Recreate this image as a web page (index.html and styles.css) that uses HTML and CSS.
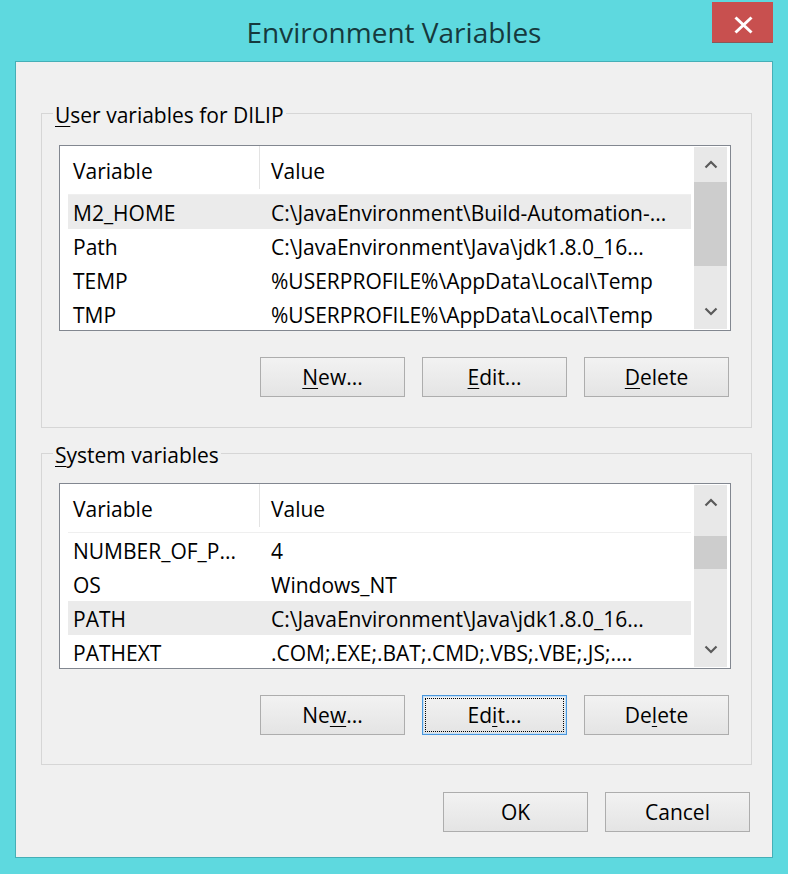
FILE: index.html
```html
<!DOCTYPE html>
<html lang="en">
<head>
<meta charset="utf-8">
<title>Environment Variables</title>
<link rel="stylesheet" href="styles.css">
</head>
<body>
<div class="titlebar">
  <div class="title">Environment Variables</div>
  <div class="close">
    <svg width="61" height="40" viewBox="0 0 61 40"><path d="M23.5 15.5 L39.5 30.5 M39.5 15.5 L23.5 30.5" stroke="#fff" stroke-width="3" fill="none"/></svg>
  </div>
</div>
<div class="client">
  <fieldset class="group group-user">
    <legend><u>U</u>ser variables for DILIP</legend>
    <div class="gbody">
      <div class="list">
        <div class="list-main">
          <div class="list-head"><div class="c1">Variable</div><div class="c2">Value</div></div>
          <div class="row sel"><div class="c1">M2_HOME</div><div class="c2">C:\JavaEnvironment\Build-Automation-...</div></div>
          <div class="row"><div class="c1">Path</div><div class="c2">C:\JavaEnvironment\Java\jdk1.8.0_16...</div></div>
          <div class="row"><div class="c1">TEMP</div><div class="c2">%USERPROFILE%\AppData\Local\Temp</div></div>
          <div class="row"><div class="c1">TMP</div><div class="c2">%USERPROFILE%\AppData\Local\Temp</div></div>
        </div>
        <div class="sb">
          <div class="track">
            <div class="arrow"><svg width="14" height="9" viewBox="0 0 14 9"><polyline points="1.5,7.5 7,2 12.5,7.5" fill="none" stroke="#5a5a5a" stroke-width="2.2"/></svg></div>
            <div class="thumb thumb-user"></div>
            <div class="fill"></div>
            <div class="arrow"><svg width="14" height="9" viewBox="0 0 14 9"><polyline points="1.5,1.5 7,7 12.5,1.5" fill="none" stroke="#5a5a5a" stroke-width="2.2"/></svg></div>
          </div>
        </div>
      </div>
      <div class="btns">
        <button class="btn"><span><u>N</u>ew...</span></button>
        <button class="btn"><span><u>E</u>dit...</span></button>
        <button class="btn"><span><u>D</u>elete</span></button>
      </div>
    </div>
  </fieldset>
  <fieldset class="group group-sys">
    <legend><u>S</u>ystem variables</legend>
    <div class="gbody">
      <div class="list">
        <div class="list-main">
          <div class="list-head"><div class="c1">Variable</div><div class="c2">Value</div></div>
          <div class="row"><div class="c1">NUMBER_OF_P...</div><div class="c2">4</div></div>
          <div class="row"><div class="c1">OS</div><div class="c2">Windows_NT</div></div>
          <div class="row sel"><div class="c1">PATH</div><div class="c2">C:\JavaEnvironment\Java\jdk1.8.0_16...</div></div>
          <div class="row"><div class="c1">PATHEXT</div><div class="c2">.COM;.EXE;.BAT;.CMD;.VBS;.VBE;.JS;....</div></div>
        </div>
        <div class="sb">
          <div class="track">
            <div class="arrow"><svg width="14" height="9" viewBox="0 0 14 9"><polyline points="1.5,7.5 7,2 12.5,7.5" fill="none" stroke="#5a5a5a" stroke-width="2.2"/></svg></div>
            <div class="gap-sys"></div>
            <div class="thumb thumb-sys"></div>
            <div class="fill"></div>
            <div class="arrow"><svg width="14" height="9" viewBox="0 0 14 9"><polyline points="1.5,1.5 7,7 12.5,1.5" fill="none" stroke="#5a5a5a" stroke-width="2.2"/></svg></div>
          </div>
        </div>
      </div>
      <div class="btns">
        <button class="btn"><span>Ne<u>w</u>...</span></button>
        <button class="btn focus"><span>Ed<u>i</u>t...</span></button>
        <button class="btn"><span>De<u>l</u>ete</span></button>
      </div>
    </div>
  </fieldset>
  <div class="dlg-btns">
    <button class="btn">OK</button>
    <button class="btn">Cancel</button>
  </div>
</div>
</body>
</html>
```

FILE: styles.css
```css
html, body {
  margin: 0;
  padding: 0;
}
body {
  width: 788px;
  height: 874px;
  overflow: hidden;
  background: #5ed9df;
  font-family: "Open Sans", "Noto Sans", sans-serif;
  font-size: 21px;
  color: #000;
}
.titlebar {
  display: grid;
  grid-template-columns: 1fr auto 1fr;
  height: 61px;
}
.title {
  grid-column: 2;
  padding-top: 13px;
  font-size: 28px;
  line-height: 38px;
  color: #16393d;
  white-space: nowrap;
}
.close {
  grid-column: 3;
  justify-self: end;
  align-self: start;
  margin: 2px 15px 0 0;
  width: 61px;
  height: 40px;
  background: #c8504f;
  box-shadow: 0 1px 0 #8a5858;
}
.close svg {
  display: block;
}
.client {
  margin: 0 15px;
  background: #f0f0f0;
  border: 1px solid #45afb7;
  padding: 37px 0 25px;
}
.group {
  margin: 0 20px 0 25px;
  padding: 0;
  border: 1px solid #d6d6d6;
  min-width: 0;
}
.group-sys {
  margin-top: 11px;
}
legend {
  margin-left: 11px;
  padding: 4px 2px 0;
  line-height: 24px;
  font-size: 21px;
}
u {
  text-decoration-thickness: 1px;
  text-underline-offset: 3px;
}
.gbody {
  padding: 18px 20px 30px 17px;
}
.group-sys .gbody {
  padding-top: 16px;
  padding-bottom: 29px;
}
.list {
  display: flex;
  height: 186px;
  box-sizing: border-box;
  border: 1px solid #828790;
  background: #fff;
}
.list-main {
  flex: 1;
  min-width: 0;
  overflow: hidden;
}
.list-head,
.row {
  display: grid;
  grid-template-columns: 191px 1fr;
  margin: 0 3px 0 8px;
}
.list-head {
  height: 49px;
  box-sizing: border-box;
  border-bottom: 1px solid #efefef;
  align-items: start;
}
.list-head .c1,
.list-head .c2 {
  height: 43px;
  box-sizing: border-box;
  padding-top: 7px;
  display: flex;
  align-items: center;
}
.list-head .c2 {
  border-left: 1px solid #e3e3e3;
  padding-left: 11px;
}
.c1 {
  padding-left: 5px;
  white-space: nowrap;
  overflow: hidden;
}
.c2 {
  padding-left: 12px;
  white-space: nowrap;
  overflow: hidden;
}
.row {
  height: 34px;
}
.row .c1,
.row .c2 {
  padding-top: 3px;
  line-height: 31px;
}
.row.sel {
  background: #ebebeb;
}
.sb {
  width: 36px;
  flex: none;
  box-sizing: border-box;
  padding: 1px 3px 1px 0;
  display: flex;
}
.track {
  flex: 1;
  background: #e8e8e8;
  display: flex;
  flex-direction: column;
}
.arrow {
  height: 35px;
  flex: none;
  display: flex;
  align-items: center;
  justify-content: center;
}
.arrow svg {
  display: block;
}
.thumb {
  flex: none;
  background: #cdcdcd;
}
.thumb-user {
  height: 84px;
}
.gap-sys {
  flex: none;
  height: 16px;
}
.thumb-sys {
  height: 33px;
}
.fill {
  flex: 1;
}
.btns {
  display: flex;
  justify-content: flex-end;
  gap: 17px;
  margin-top: 26px;
  padding-right: 2px;
}
.btn {
  width: 145px;
  height: 40px;
  box-sizing: border-box;
  padding: 0;
  margin: 0;
  border: 1px solid #adadad;
  background: linear-gradient(#f2f2f2, #e4e4e4);
  font-family: inherit;
  font-size: 21px;
  color: #000;
  display: flex;
  align-items: center;
  justify-content: center;
}
.btn.focus {
  border-color: #4a97dc;
  box-shadow: inset 0 0 0 1px #c4e0f8;
  outline: 1px dotted #000;
  outline-offset: -4px;
}
.dlg-btns {
  display: flex;
  justify-content: flex-end;
  gap: 17px;
  margin-top: 27px;
  padding-right: 22px;
}
```
